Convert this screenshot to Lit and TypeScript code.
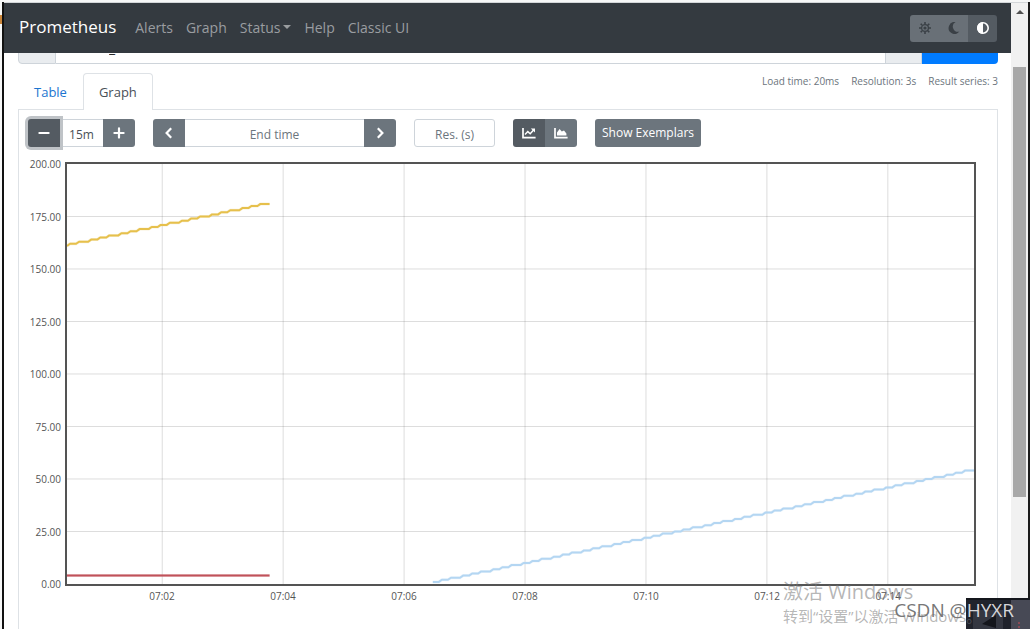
import { LitElement, html, svg, css } from "lit";
import { customElement, state } from "lit/decorators.js";

const WINDOW_SECONDS = 900;
const STEP = 3;
const Y_MAX = 200;
const Y_TICKS = [200, 175, 150, 125, 100, 75, 50, 25, 0];
const X_TICKS = ["07:02", "07:04", "07:06", "07:08", "07:10", "07:12", "07:14"];
const X_FIRST = 94.5;

interface Series {
  color: string;
  from: number;
  to: number;
  value: (t: number) => number;
}

const SERIES: Series[] = [
  { color: "#c0525a", from: 0, to: 201, value: () => 4 },
  { color: "#e6c04c", from: 0, to: 201, value: (t) => 161 + Math.floor((t + 8) / 10) },
  { color: "#b4d6f2", from: 363, to: 900, value: (t) => 1 + Math.floor((t - 361) / 10) },
];

function points(s: Series): string {
  const out: string[] = [];
  for (let t = s.from; t <= s.to; t += STEP) out.push(`${t},${Y_MAX - s.value(t)}`);
  return out.join(" ");
}

@customElement("time-chart")
export class TimeChart extends LitElement {
  static styles = css`
    :host { display: grid; grid-template-columns: 46px minmax(0, 1fr); }
    .ylabels {
      display: flex; flex-direction: column; justify-content: space-between;
      margin: -5px 0; padding-right: 4px; text-align: right;
      font-size: 10px; line-height: 14px; color: #545454;
    }
    .plot { border: 2px solid #545454; height: 420px; }
    .plot svg { display: block; width: 100%; height: 100%; }
    .grid { stroke: rgba(84, 84, 84, 0.2); stroke-width: 1; }
    .shadow { fill: none; stroke-width: 3; opacity: 0.2; stroke-linejoin: round; }
    .line { fill: none; stroke-width: 2; stroke-linejoin: round; }
    .grid, .shadow, .line { vector-effect: non-scaling-stroke; }
    .xlabels {
      grid-column: 2; display: flex; padding: 3px 3% 0 4%;
      font-size: 10px; line-height: 14px; color: #545454;
    }
    .xlabels span { flex: 1; text-align: center; }
  `;

  render() {
    return html`
      <div class="ylabels">${Y_TICKS.map((v) => html`<span>${v.toFixed(2)}</span>`)}</div>
      <div class="plot">
        <svg viewBox="0 0 ${WINDOW_SECONDS} ${Y_MAX}" preserveAspectRatio="none" role="img" aria-label="Graph">
          ${X_TICKS.map((_, i) => {
            const x = X_FIRST + i * 120;
            return svg`<line class="grid" x1=${x} x2=${x} y1="0" y2=${Y_MAX} />`;
          })}
          ${Y_TICKS.slice(1, -1).map(
            (v) => svg`<line class="grid" x1="0" x2=${WINDOW_SECONDS} y1=${Y_MAX - v} y2=${Y_MAX - v} />`
          )}
          ${SERIES.map(
            (s) => svg`
              <polyline class="shadow" stroke=${s.color} points=${points(s)} />
              <polyline class="line" stroke=${s.color} points=${points(s)} />`
          )}
        </svg>
      </div>
      <div class="xlabels">${X_TICKS.map((t) => html`<span>${t}</span>`)}</div>
    `;
  }
}

@customElement("app-root")
export class AppRoot extends LitElement {
  @state() private stacked = false;

  static styles = css`
    :host {
      display: block; height: 100vh; overflow: hidden; position: relative;
      background: #fff; color: #495057;
      font-family: "Open Sans", "Noto Sans CJK SC", sans-serif;
    }
    * { box-sizing: border-box; }
    button, input { font: inherit; margin: 0; }
    button { border: 0; padding: 0; cursor: pointer; display: grid; place-items: center; }
    a { text-decoration: none; color: inherit; }
    svg { display: block; }

    .window { height: 100%; display: grid; grid-template-columns: minmax(0, 1fr) 17px; grid-template-rows: minmax(0, 1fr);
      border-left: 2px solid #111; border-right: 2px solid #1b1b1b; margin-left: 2px; }
    .frame { height: 100%; padding-top: 2px; background: #f6f7f7; }
    .page { border-top: 1px solid #d3d6d9; background: #fff; overflow: hidden; }

    .navbar { position: relative; z-index: 1; height: 50px; background: #343a40; display: flex; align-items: center;
      padding: 0 14px 0 15px; color: #9a9da0; font-size: 14px; line-height: 20px; }
    .brand { color: #fff; font-size: 17px; line-height: 24px; margin-right: 19px; padding-bottom: 3px; }
    .links { display: flex; gap: 13px; }
    .drop::after { content: ""; display: inline-block; margin-left: 3px; vertical-align: 4px;
      border: 4px solid transparent; border-top-color: currentColor; border-bottom: 0; }
    .themes { margin-left: auto; display: flex; border-radius: 3px; overflow: hidden; }
    .themes button { width: 29px; height: 27px; background: #697077; color: #3a4046; }
    .themes .on { background: #545b62; color: #fff; }

    .body { padding: 0 13px 0 14px; }
    .query { display: flex; height: 38px; margin-top: -27px; }
    .addon { width: 37px; background: #e9ecef; border: 1px solid #ced4da; display: grid; place-items: center; color: #495057; }
    .addon.first { width: 38px; border-radius: 4px 0 0 4px; }
    .query input { flex: 1; min-width: 0; border: 1px solid #ced4da; border-width: 1px 0; padding: 10px 53px 6px; font-size: 14px; color: #222; outline: 0; }
    .execute { width: 76px; background: #007bff; border-radius: 0 4px 4px 0; }

    .tabrow { display: flex; align-items: flex-start; height: 46px; padding-top: 9px; font-size: 13px; line-height: 20px; }
    .tab { height: 37px; padding: 8px 15px; border: 1px solid transparent; border-bottom: 0; background: none; color: #1b74d0; }
    .tab.on { position: relative; background: #fff; color: #495057; border-color: #dee2e6; border-radius: 4px 4px 0 0; }
    .stats { margin-left: auto; display: flex; gap: 12px; font-size: 10px; line-height: 16px; color: #6c757d; }

    .pane { border: 1px solid #dee2e6; border-bottom: 0; height: 560px; margin-top: -1px; }
    .controls { display: flex; gap: 18px; padding: 9px; font-size: 12px; line-height: 18px; }
    .group { display: flex; height: 28px; }
    .group button { width: 32px; background: #6c757d; color: #fff; }
    .group button:first-child { border-radius: 3px 0 0 3px; }
    .group button:last-child { border-radius: 0 3px 3px 0; }
    .group .on { background: #545b62; }
    .group .focus { position: relative; box-shadow: 0 0 0 3px #bfc3c7; }
    .controls input { height: 28px; border: 1px solid #ced4da; background: #fff; text-align: center; color: #495057; padding: 2px 4px 0; outline: 0; }
    .group input { border-width: 1px 0; }
    .controls input::placeholder { color: #6c757d; opacity: 1; }
    .range { width: 43px; }
    .end { width: 179px; }
    .controls .res { width: 81px; border-radius: 3px; }
    .exemplars { height: 28px; padding: 0 7px; border-radius: 3px; background: #6c757d; color: #fff; }
    .chart { padding: 6px 21px 0 0; }

    .scroll { background: #f1f1f1; border-top: 1px solid #d3d6d9; padding: 7px 2px 0; display: flex; flex-direction: column; align-items: center; gap: 53px; }
    .arrow { border: 4px solid transparent; border-top: 0; border-bottom-color: #505050; }
    .thumb { width: 13px; flex: 0 0 69.5%; background: #a8a8a8; }

    .shade { position: absolute; right: 0; bottom: 0; width: 64px; height: 31px; background: #20232c; }
    .shade svg { width: 64px; height: 31px; }
    .activate { position: absolute; left: 783px; bottom: 3px; color: rgba(120, 120, 120, 0.55); font-size: 15px; line-height: 20px; white-space: nowrap; }
    .activate strong { display: block; font-weight: 400; font-size: 20px; line-height: 28px; }
    .mark { position: absolute; right: 16px; bottom: 7px; font-size: 19px; line-height: 24px; color: #777; white-space: nowrap; }
    .mark span { color: #d5d5d8; }
    .edge { position: absolute; left: 0; top: 15px; width: 2px; height: 9px; background: #c9853a; }
  `;

  render() {
    return html`
      <div class="frame">
        <div class="window">
          <main class="page">
            <nav class="navbar">
              <a class="brand" href="#">Prometheus</a>
              <div class="links">
                <a href="#">Alerts</a><a href="#">Graph</a><a href="#" class="drop">Status</a><a href="#">Help</a><a href="#">Classic UI</a>
              </div>
              <div class="themes">
                <button aria-label="Light theme">
                  <svg width="12" height="12" viewBox="0 0 12 12" fill="none" stroke="currentColor">
                    <circle cx="6" cy="6" r="3.4" stroke-width="1.3" /><circle cx="6" cy="6" r="1.6" fill="currentColor" stroke="none" />
                    <path stroke-width="1.6" d="M6 0v2M6 10v2M0 6h2M10 6h2M1.7 1.7l1.4 1.4M8.9 8.9l1.4 1.4M1.7 10.3l1.4-1.4M8.9 3.1l1.4-1.4" />
                  </svg>
                </button>
                <button aria-label="Dark theme">
                  <svg width="12" height="12" viewBox="0 0 12 12"><path fill="currentColor" d="M7.6 0A6 6 0 1 0 11.4 9.6 5.2 5.2 0 0 1 7.6 0z" /></svg>
                </button>
                <button class="on" aria-label="Browser theme">
                  <svg width="12" height="12" viewBox="0 0 12 12"><circle cx="6" cy="6" r="5.2" fill="none" stroke="currentColor" stroke-width="1.6" /><path fill="currentColor" d="M6 0v12A6 6 0 0 1 6 0z" /></svg>
                </button>
              </div>
            </nav>
            <div class="body">
              <div class="query">
                <span class="addon first">
                  <svg width="14" height="14" viewBox="0 0 14 14" fill="none" stroke="currentColor" stroke-width="2"><circle cx="5.6" cy="5.6" r="4.4" /><path d="M9 9l4.2 4.2" /></svg>
                </span>
                <input aria-label="Expression" value="_" />
                <span class="addon">
                  <svg width="16" height="16" viewBox="0 0 16 16" fill="none" stroke="currentColor" stroke-width="1.5"><circle cx="8" cy="8" r="7" /><path d="M1 8h14M8 1c-4 4-4 10 0 14M8 1c4 4 4 10 0 14" /></svg>
                </span>
                <button class="execute" aria-label="Execute"></button>
              </div>
              <div class="tabrow">
                <button class="tab">Table</button>
                <button class="tab on">Graph</button>
                <div class="stats"><span>Load time: 20ms</span><span>Resolution: 3s</span><span>Result series: 3</span></div>
              </div>
              <section class="pane">
                <div class="controls">
                  <div class="group">
                    <button class="on focus" aria-label="Decrease range">
                      <svg width="12" height="12" viewBox="0 0 12 12"><path stroke="#fff" stroke-width="2.2" stroke-linecap="round" d="M1.4 6h9.2" /></svg>
                    </button>
                    <input class="range" aria-label="Range" value="15m" />
                    <button aria-label="Increase range">
                      <svg width="12" height="12" viewBox="0 0 12 12"><path stroke="#fff" stroke-width="2.2" stroke-linecap="round" d="M1.4 6h9.2M6 1.4v9.2" /></svg>
                    </button>
                  </div>
                  <div class="group">
                    <button aria-label="Earlier">
                      <svg width="12" height="12" viewBox="0 0 12 12"><path fill="none" stroke="#fff" stroke-width="2.2" d="M8.2 1.2L3.6 6l4.6 4.8" /></svg>
                    </button>
                    <input class="end" aria-label="End time" placeholder="End time" />
                    <button aria-label="Later">
                      <svg width="12" height="12" viewBox="0 0 12 12"><path fill="none" stroke="#fff" stroke-width="2.2" d="M3.8 1.2L8.4 6l-4.6 4.8" /></svg>
                    </button>
                  </div>
                  <input class="res" aria-label="Resolution" placeholder="Res. (s)" />
                  <div class="group">
                    <button class=${this.stacked ? "" : "on"} aria-label="Line graph" @click=${() => (this.stacked = false)}>
                      <svg width="14" height="12" viewBox="0 0 14 12" fill="none" stroke="#fff"><path stroke-width="1.7" d="M1 1v9.6h12.6" /><path stroke-width="1.5" d="M3 7.6l2.8-3 2.4 2.2L11.6 3" /><path fill="#fff" stroke="none" d="M8.8 1.4H13v4.2z" /></svg>
                    </button>
                    <button class=${this.stacked ? "on" : ""} aria-label="Stacked graph" @click=${() => (this.stacked = true)}>
                      <svg width="14" height="12" viewBox="0 0 14 12"><path fill="none" stroke="#fff" stroke-width="1.7" d="M1 1v9.6h12.6" /><path fill="#fff" d="M3 8.6V5.4L5.6 2l2.2 2.6L10 3.4l2.4 3.2v2z" /></svg>
                    </button>
                  </div>
                  <button class="exemplars">Show Exemplars</button>
                </div>
                <div class="chart"><time-chart></time-chart></div>
              </section>
            </div>
          </main>
          <div class="scroll"><span class="arrow"></span><span class="thumb"></span></div>
        </div>
      </div>
      <span class="edge"></span>
      <div class="shade">
        <svg viewBox="0 0 64 31"><path fill="#343741" d="M7 12h30v19H7z" /><path fill="#474955" d="M45 2h19v29H45z" /><path fill="#14161c" d="M16 26l14-9v13zM0 0h64v2H0z" /><path stroke="#8a4a55" stroke-width="2" stroke-dasharray="2 2" d="M53 24v7" /></svg>
      </div>
      <div class="activate"><strong>激活 Windows</strong>转到“设置”以激活 Windows。</div>
      <div class="mark">CSDN @<span>HYXR</span></div>
    `;
  }
}
